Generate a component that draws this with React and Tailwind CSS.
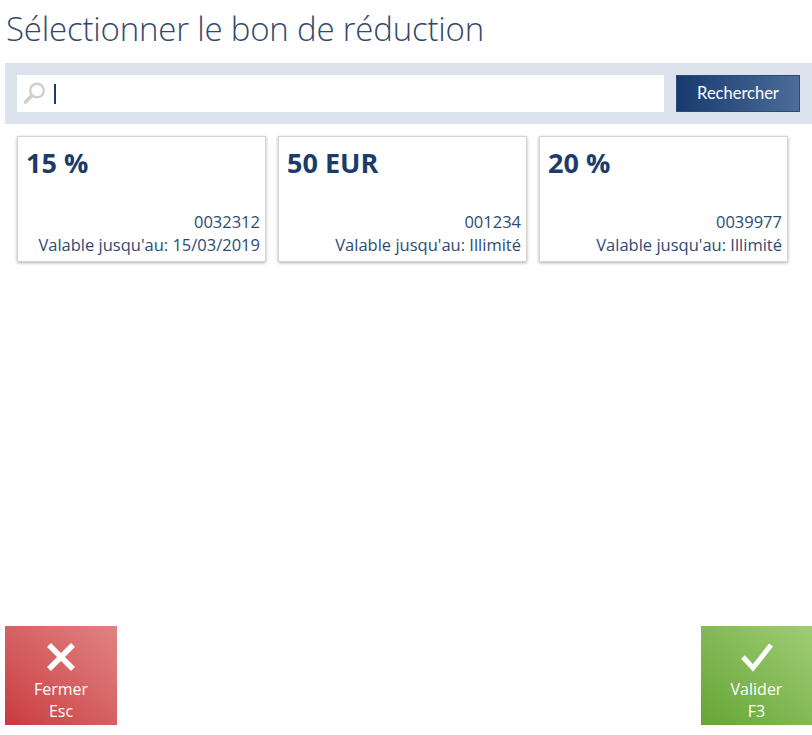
import React from "react";

const cards = [
  { title: "15 %", code: "0032312", valid: "Valable jusqu'au: 15/03/2019" },
  { title: "50 EUR", code: "001234", valid: "Valable jusqu'au: Illimité" },
  { title: "20 %", code: "0039977", valid: "Valable jusqu'au: Illimité" },
];

export default function App() {
  return (
    <div
      className="w-[812px] h-[735px] bg-white flex flex-col overflow-hidden"
      style={{ fontFamily: '"Open Sans", "Noto Sans", sans-serif' }}
    >
      <h1 className="pl-[6px] pt-[8px] h-[63px] text-[33px] font-light leading-[42px] text-[#34496a] tracking-[-0.2px]">
        Sélectionner le bon de réduction
      </h1>
      <div className="ml-[5px] bg-[#dce3ec] h-[61px] flex items-center pl-[12px] pr-[12px] gap-[12px]">
        <div className="flex-1 h-[37px] bg-white flex items-center pl-[5px]">
          <svg width="25" height="25" viewBox="0 0 25 25" className="shrink-0">
            <circle cx="15" cy="9.5" r="6.8" fill="none" stroke="#cfcfcf" strokeWidth="2.4" />
            <path d="M10 14.5 L3.5 21" stroke="#cfcfcf" strokeWidth="3.6" strokeLinecap="round" />
          </svg>
          <div className="ml-[7px] w-[1.5px] h-[20px] bg-[#1e3a66]" />
        </div>
        <button
          className="w-[124px] h-[37px] text-white text-[16.5px] bg-gradient-to-r from-[#173a6e] to-[#4d6c98] border border-[#2c4a78]"
          style={{ fontFamily: 'Lato, "Open Sans", sans-serif' }}
        >
          Rechercher
        </button>
      </div>
      <div className="flex gap-[12px] pl-[17px] pt-[12px]">
        {cards.map((c) => (
          <div
            key={c.code}
            className="w-[249px] h-[126px] bg-white border border-[#d4d4d4] shadow-[0_1px_3px_rgba(0,0,0,0.3)] flex flex-col px-[5px] pt-[9px] pb-[5px]"
          >
            <div className="text-[27px] font-bold text-[#1b3c6b] leading-[34px] pl-[3px]">{c.title}</div>
            <div className="flex-1" />
            <div className="text-right text-[16.5px] text-[#2e4a74] leading-[23px]">{c.code}</div>
            <div className="text-right text-[16.5px] text-[#2e4a74] leading-[23px]">{c.valid}</div>
          </div>
        ))}
      </div>
      <div className="flex-1" />
      <div className="flex justify-between pl-[5px] pb-[10px]">
        <button
          className="w-[112px] h-[99px] flex flex-col items-center text-white text-[16px] bg-gradient-to-tr from-[#c9393f] to-[#e08384]"
          style={{ fontFamily: '"Open Sans", sans-serif' }}
        >
          <svg width="34" height="34" viewBox="0 0 34 34" className="mt-[14px]">
            <path d="M5 5 L29 29 M29 5 L5 29" stroke="white" strokeWidth="5.5" />
          </svg>
          <span className="leading-[22px] mt-[4px]">Fermer</span>
          <span className="leading-[22px]">Esc</span>
        </button>
        <button
          className="w-[111px] h-[99px] flex flex-col items-center text-white text-[16px] bg-gradient-to-tr from-[#65a535] to-[#a0cd73]"
          style={{ fontFamily: '"Open Sans", sans-serif' }}
        >
          <svg width="34" height="34" viewBox="0 0 34 34" className="mt-[14px]">
            <path d="M3 17 L13 28 L31 5" fill="none" stroke="white" strokeWidth="5" />
          </svg>
          <span className="leading-[22px] mt-[4px]">Valider</span>
          <span className="leading-[22px]">F3</span>
        </button>
      </div>
    </div>
  );
}
